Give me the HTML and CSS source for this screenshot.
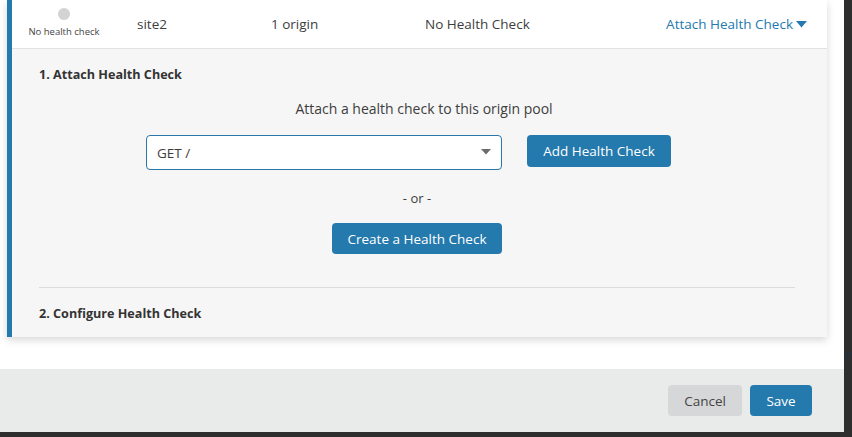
FILE: index.html
```html
<!DOCTYPE html>
<html>
<head>
<meta charset="utf-8">
<link rel="stylesheet" href="styles.css">
</head>
<body>
<div class="backdrop-text">n</div>
<div class="modal">
  <div class="modal-body">
    <div class="card">
      <div class="pool-row">
        <div class="status">
          <span class="dot"></span>
          <span class="status-label">No health check</span>
        </div>
        <div class="name">site2</div>
        <div class="origins">1 origin</div>
        <div class="health">No Health Check</div>
        <a class="action">Attach Health Check<svg class="action-caret" width="11" height="7" viewBox="0 0 11 7"><path d="M0 0H11L5.5 6.5Z" fill="#2479ad"/></svg></a>
      </div>
      <div class="expand">
        <h3 class="step">1. Attach Health Check</h3>
        <p class="sub">Attach a health check to this origin pool</p>
        <div class="attach-row">
          <div class="select">
            <span>GET /</span>
            <svg class="select-caret" width="10" height="6" viewBox="0 0 10 6"><path d="M0 0H10L5 5.5Z" fill="#6b6b6b"/></svg>
          </div>
          <button class="btn btn-primary btn-add">Add Health Check</button>
        </div>
        <p class="or">- or -</p>
        <div class="center">
          <button class="btn btn-primary btn-create">Create a Health Check</button>
        </div>
        <hr class="divider">
        <h3 class="step step-2">2. Configure Health Check</h3>
      </div>
    </div>
  </div>
  <div class="modal-footer">
    <button class="btn btn-cancel">Cancel</button>
    <button class="btn btn-primary btn-save">Save</button>
  </div>
</div>
</body>
</html>
```
FILE: styles.css
```css
html, body {
  margin: 0;
  padding: 0;
}
body {
  width: 852px;
  height: 437px;
  background: #2e2e2e;
  font-family: "Open Sans", "Noto Sans", sans-serif;
  color: #3d3d3d;
  position: relative;
  overflow: hidden;
}
.backdrop-text {
  position: absolute;
  left: 845px;
  top: 344px;
  font-size: 13px;
  color: #1f3447;
  line-height: 20px;
}
.modal {
  width: 844px;
  height: 432px;
  background: #fff;
  display: flex;
  flex-direction: column;
}
.modal-body {
  flex: 1;
  padding: 0 17px 0 7px;
  overflow: hidden;
}
.card {
  background: #f6f6f6;
  border-left: 5px solid #2479ad;
  box-shadow: 0 3px 8px rgba(0, 0, 0, 0.16);
}
.pool-row {
  height: 48px;
  background: #fff;
  border-bottom: 1px solid #e2e2e2;
  display: flex;
  align-items: center;
  font-size: 13.5px;
  padding-right: 20px;
}
.status {
  width: 104px;
  display: flex;
  flex-direction: column;
  align-items: center;
  margin-top: -2px;
}
.dot {
  width: 12px;
  height: 12px;
  border-radius: 50%;
  background: #d3d3d3;
}
.status-label {
  font-size: 9.5px;
  line-height: 12px;
  margin-top: 6px;
  color: #444;
}
.name {
  width: 134px;
  padding-left: 21px;
}
.origins {
  width: 154px;
}
.health {
  flex: 1;
}
.action {
  color: #2479ad;
  display: flex;
  align-items: center;
  gap: 3px;
  margin-left: 1px;
}
.action-caret {
  margin-top: 1px;
}
.expand {
  padding: 17px 32px 14px 27px;
}
.step {
  margin: 0;
  font-size: 12.6px;
  font-weight: 700;
  line-height: 18px;
  color: #333;
}
.sub {
  margin: 16px 0 0;
  text-align: center;
  font-size: 14px;
  line-height: 18px;
  padding-left: 14px;
}
.attach-row {
  margin-top: 17px;
  display: flex;
  justify-content: center;
  align-items: flex-start;
  gap: 25px;
  padding-right: 17px;
}
.select {
  height: 33px;
  border: 1px solid #2a76a8;
  border-radius: 4px;
  background: #fff;
  display: flex;
  align-items: center;
  justify-content: space-between;
  padding: 0 10px 0 10px;
  box-sizing: content-box;
  width: 334px;
  font-size: 13.5px;
}
.select-caret {
  margin-top: -2px;
}
.btn {
  font-family: "Open Sans", "Noto Sans", sans-serif;
  border: none;
  border-radius: 4px;
  font-size: 13.5px;
  line-height: 18px;
  padding: 0;
  cursor: pointer;
}
.btn-primary {
  background: #2479ad;
  color: #fff;
}
.btn-add {
  width: 144px;
  height: 32px;
}
.or {
  margin: 19px 0 0;
  text-align: center;
  font-size: 13px;
  line-height: 18px;
}
.center {
  margin-top: 16px;
  display: flex;
  justify-content: center;
}
.btn-create {
  width: 170px;
  height: 31px;
}
.divider {
  margin: 33px 0 0;
  border: none;
  border-top: 1px solid #dcdcdc;
  height: 0;
}
.step-2 {
  margin-top: 17px;
}
.modal-footer {
  height: 63px;
  background: #e9eaea;
  display: flex;
  justify-content: flex-end;
  align-items: center;
  gap: 8px;
  padding-right: 32px;
}
.btn-cancel {
  width: 74px;
  height: 31px;
  background: #d6d7d8;
  color: #444;
}
.btn-save {
  width: 62px;
  height: 31px;
}
```
